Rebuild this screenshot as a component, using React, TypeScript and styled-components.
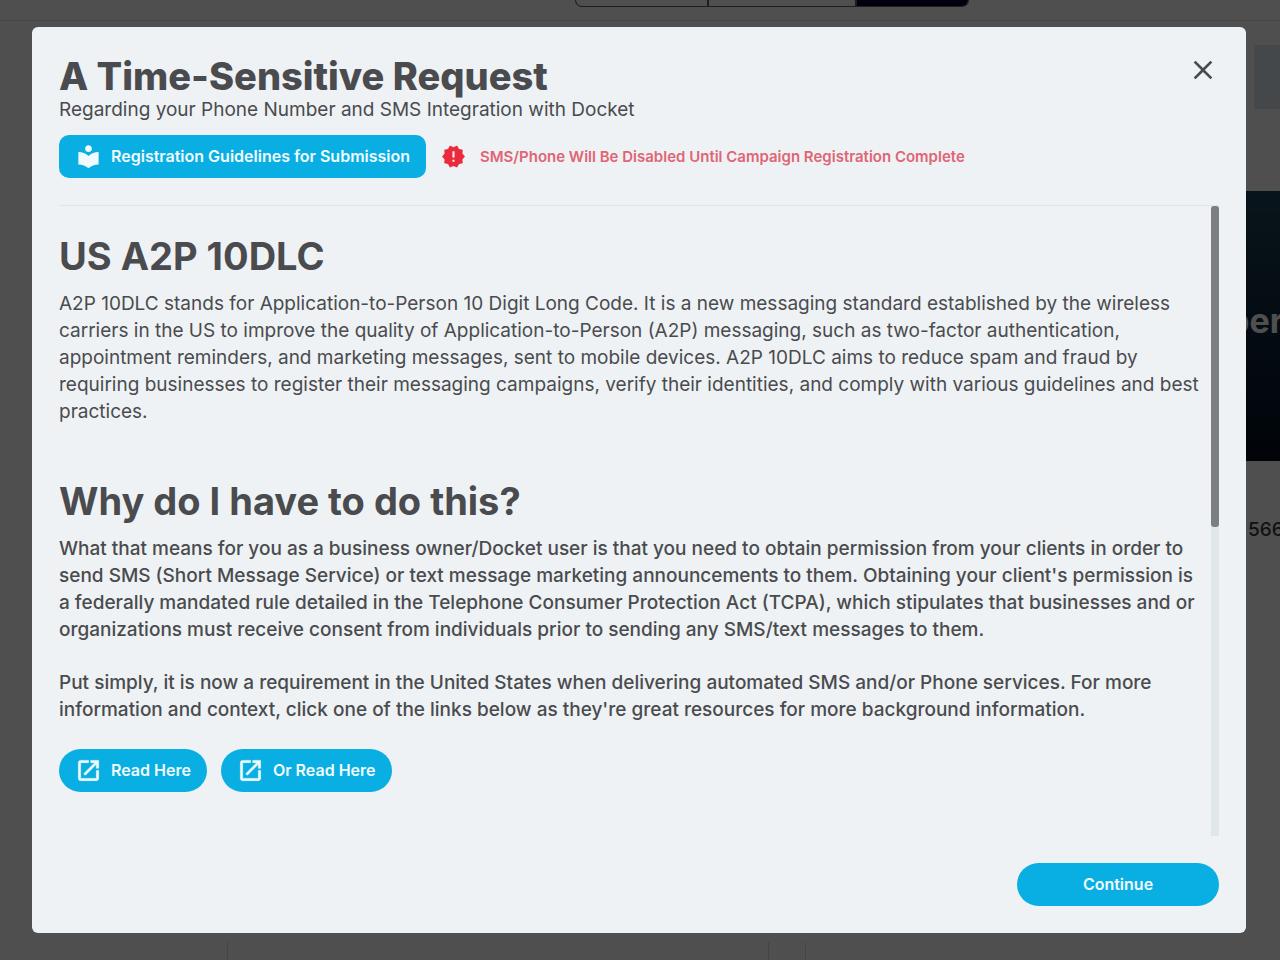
import React from "react";
import styled, { createGlobalStyle } from "styled-components";
import { MdClose, MdLocalLibrary, MdNewReleases } from "react-icons/md";

const GlobalStyle = createGlobalStyle`
  *, *::before, *::after { box-sizing: border-box; }
  body {
    margin: 0;
    background: #ffffff;
    color: #4a4b4e;
    font-family: Inter, "Liberation Sans", sans-serif;
    font-size: 19px;
    line-height: 27px;
  }
  h1, h2, p { margin: 0; }
  button { font: inherit; cursor: pointer; }
`;

/* ---------- page behind the dialog ---------- */

const Page = styled.div`
  display: flex;
  flex-direction: column;
  height: 100vh;
  overflow: hidden;
`;

const TopBar = styled.header`
  display: flex;
  justify-content: center;
  align-items: flex-start;
  height: 21px;
  padding-left: 264px;
  border-bottom: 1px solid #e6e6e6;
`;

const Segments = styled.div`
  display: flex;
  width: 394px;
  height: 7px;
  border: 1px solid #5c6468;
  border-top: 0;
  border-radius: 0 0 8px 8px;
  overflow: hidden;
`;

const Segment = styled.span<{ $grow: number; $active?: boolean }>`
  flex: ${(p) => p.$grow} 1 0;
  background: ${(p) => (p.$active ? "#000030" : "transparent")};
  border-right: ${(p) => (p.$active ? "0" : "2px solid #5c6468")};
`;

const Body = styled.div`
  display: flex;
  flex: 1;
  min-height: 0;
`;

const Columns = styled.div`
  display: flex;
  flex: 1;
  align-items: flex-end;
`;

const Column = styled.div<{ $grow: number }>`
  flex: ${(p) => p.$grow} 1 0;
  height: 18px;
  border-right: 1px solid #dcdcdc;

  &:last-child { border-right: 0; }
`;

const SideColumn = styled.aside`
  width: 80px;
  padding-top: 24px;
`;

const Tile = styled.div`
  height: 64px;
  margin: 0 0 82px 54px;
  background: #dfe9f0;
`;

const Hero = styled.div`
  display: flex;
  align-items: center;
  height: 270px;
  padding: 0 0 12px 28px;
  overflow: hidden;
  background: linear-gradient(#1c4258, #081c30 70%, #04101e);
  color: #ffffff;
  font-size: 34px;
  font-weight: 700;
`;

const Amount = styled.p`
  padding: 55px 0 0 48px;
  color: #383838;
  font-weight: 500;
`;

/* ---------- dialog ---------- */

const Backdrop = styled.div`
  position: fixed;
  inset: 0;
  display: flex;
  padding: 27px 34px 27px 32px;
  background: rgba(0, 0, 0, 0.69);
`;

const Dialog = styled.section`
  display: flex;
  flex-direction: column;
  flex: 1;
  min-width: 0;
  padding: 27px;
  border-radius: 6px;
  background: #eef2f4;
`;

const Header = styled.header`
  display: flex;
  justify-content: space-between;
  align-items: flex-start;
  padding-bottom: 27px;
  border-bottom: 1px solid #e2e5e8;
`;

const Title = styled.h1`
  font-size: 38px;
  line-height: 44px;
  font-weight: 800;
`;

const Subtitle = styled.p`
  line-height: 24px;
`;

const HeaderRow = styled.div`
  display: flex;
  align-items: center;
  gap: 15px;
  margin-top: 13px;
`;

const CloseButton = styled.button`
  display: flex;
  padding: 0;
  border: 0;
  background: none;
  color: #4a4b4e;
  font-size: 32px;
`;

const ActionButton = styled.button<{ $square?: boolean; $wide?: boolean }>`
  display: inline-flex;
  align-items: center;
  justify-content: center;
  gap: 9px;
  height: 43px;
  min-width: ${(p) => (p.$wide ? "202px" : "0")};
  padding: 0 16px;
  border: 0;
  border-radius: ${(p) => (p.$square ? "10px" : "22px")};
  background: #09afe3;
  color: #f0fbff;
  font-size: 16px;
  font-weight: 600;
  white-space: nowrap;

  svg { font-size: 27px; }
`;

const Warning = styled.p`
  display: flex;
  align-items: center;
  gap: 14px;
  color: #e06575;
  font-size: 15px;
  font-weight: 600;

  svg { color: #eb2b3c; font-size: 25px; }
`;

const ScrollArea = styled.div`
  display: flex;
  flex: 1;
  gap: 4px;
  min-height: 0;
`;

const Content = styled.div`
  flex: 1;
  min-width: 0;
  overflow: hidden;
  padding-top: 25px;
`;

const Topic = styled.section`
  margin-bottom: 51px;
`;

const TopicTitle = styled.h2`
  margin-bottom: 8px;
  font-size: 38px;
  line-height: 51px;
  font-weight: 700;
`;

const Paragraph = styled.p<{ $strong?: boolean }>`
  font-weight: ${(p) => (p.$strong ? 500 : 400)};

  & + & { margin-top: 26px; }
`;

const Links = styled.div`
  display: flex;
  gap: 14px;
  margin-top: 26px;
`;

const ScrollTrack = styled.div`
  width: 8px;
  background: #dfe7eb;
`;

const ScrollThumb = styled.div`
  height: 51%;
  border-radius: 3px;
  background: #7d7e80;
`;

const Footer = styled.footer`
  display: flex;
  justify-content: flex-end;
  padding-top: 27px;
`;

function OpenIcon() {
  return (
    <svg
      viewBox="0 0 24 24"
      width="1em"
      height="1em"
      fill="currentColor"
      stroke="currentColor"
      strokeWidth="0.5"
      aria-hidden="true"
    >
      <path d="M19 19H5V5h7V3H5a2 2 0 0 0-2 2v14a2 2 0 0 0 2 2h14c1.1 0 2-.9 2-2v-7h-2v7zM14 3v2h3.59l-9.83 9.83 1.41 1.41L19 6.41V10h2V3h-7z" />
    </svg>
  );
}

export default function App() {
  return (
    <>
      <GlobalStyle />
      <Page>
        <TopBar>
          <Segments>
            <Segment $grow={132} />
            <Segment $grow={148} />
            <Segment $grow={112} $active />
          </Segments>
        </TopBar>
        <Body>
          <Columns>
            <Column $grow={228} />
            <Column $grow={541} />
            <Column $grow={36} />
            <Column $grow={395} />
          </Columns>
          <SideColumn>
            <Tile />
            <Hero>ber</Hero>
            <Amount>566</Amount>
          </SideColumn>
        </Body>
      </Page>
      <Backdrop>
        <Dialog role="dialog" aria-modal="true" aria-labelledby="dialog-title">
          <Header>
            <div>
              <Title id="dialog-title">A Time-Sensitive Request</Title>
              <Subtitle>Regarding your Phone Number and SMS Integration with Docket</Subtitle>
              <HeaderRow>
                <ActionButton type="button" $square>
                  <MdLocalLibrary aria-hidden />
                  Registration Guidelines for Submission
                </ActionButton>
                <Warning>
                  <MdNewReleases aria-hidden />
                  SMS/Phone Will Be Disabled Until Campaign Registration Complete
                </Warning>
              </HeaderRow>
            </div>
            <CloseButton type="button" aria-label="Close">
              <MdClose />
            </CloseButton>
          </Header>
          <ScrollArea>
            <Content>
              <Topic>
                <TopicTitle>US A2P 10DLC</TopicTitle>
                <Paragraph>
                  A2P 10DLC stands for Application-to-Person 10 Digit Long Code. It is a new messaging
                  standard established by the wireless carriers in the US to improve the quality of
                  Application-to-Person (A2P) messaging, such as two-factor authentication, appointment
                  reminders, and marketing messages, sent to mobile devices. A2P 10DLC aims to reduce
                  spam and fraud by requiring businesses to register their messaging campaigns, verify
                  their identities, and comply with various guidelines and best practices.
                </Paragraph>
              </Topic>
              <Topic>
                <TopicTitle>Why do I have to do this?</TopicTitle>
                <Paragraph $strong>
                  What that means for you as a business owner/Docket user is that you need to obtain
                  permission from your clients in order to send SMS (Short Message Service) or text
                  message marketing announcements to them. Obtaining your client's permission is a
                  federally mandated rule detailed in the Telephone Consumer Protection Act (TCPA),
                  which stipulates that businesses and or organizations must receive consent from
                  individuals prior to sending any SMS/text messages to them.
                </Paragraph>
                <Paragraph $strong>
                  Put simply, it is now a requirement in the United States when delivering automated
                  SMS and/or Phone services. For more information and context, click one of the links
                  below as they're great resources for more background information.
                </Paragraph>
                <Links>
                  <ActionButton type="button">
                    <OpenIcon />
                    Read Here
                  </ActionButton>
                  <ActionButton type="button">
                    <OpenIcon />
                    Or Read Here
                  </ActionButton>
                </Links>
              </Topic>
            </Content>
            <ScrollTrack>
              <ScrollThumb />
            </ScrollTrack>
          </ScrollArea>
          <Footer>
            <ActionButton type="button" $wide>Continue</ActionButton>
          </Footer>
        </Dialog>
      </Backdrop>
    </>
  );
}
